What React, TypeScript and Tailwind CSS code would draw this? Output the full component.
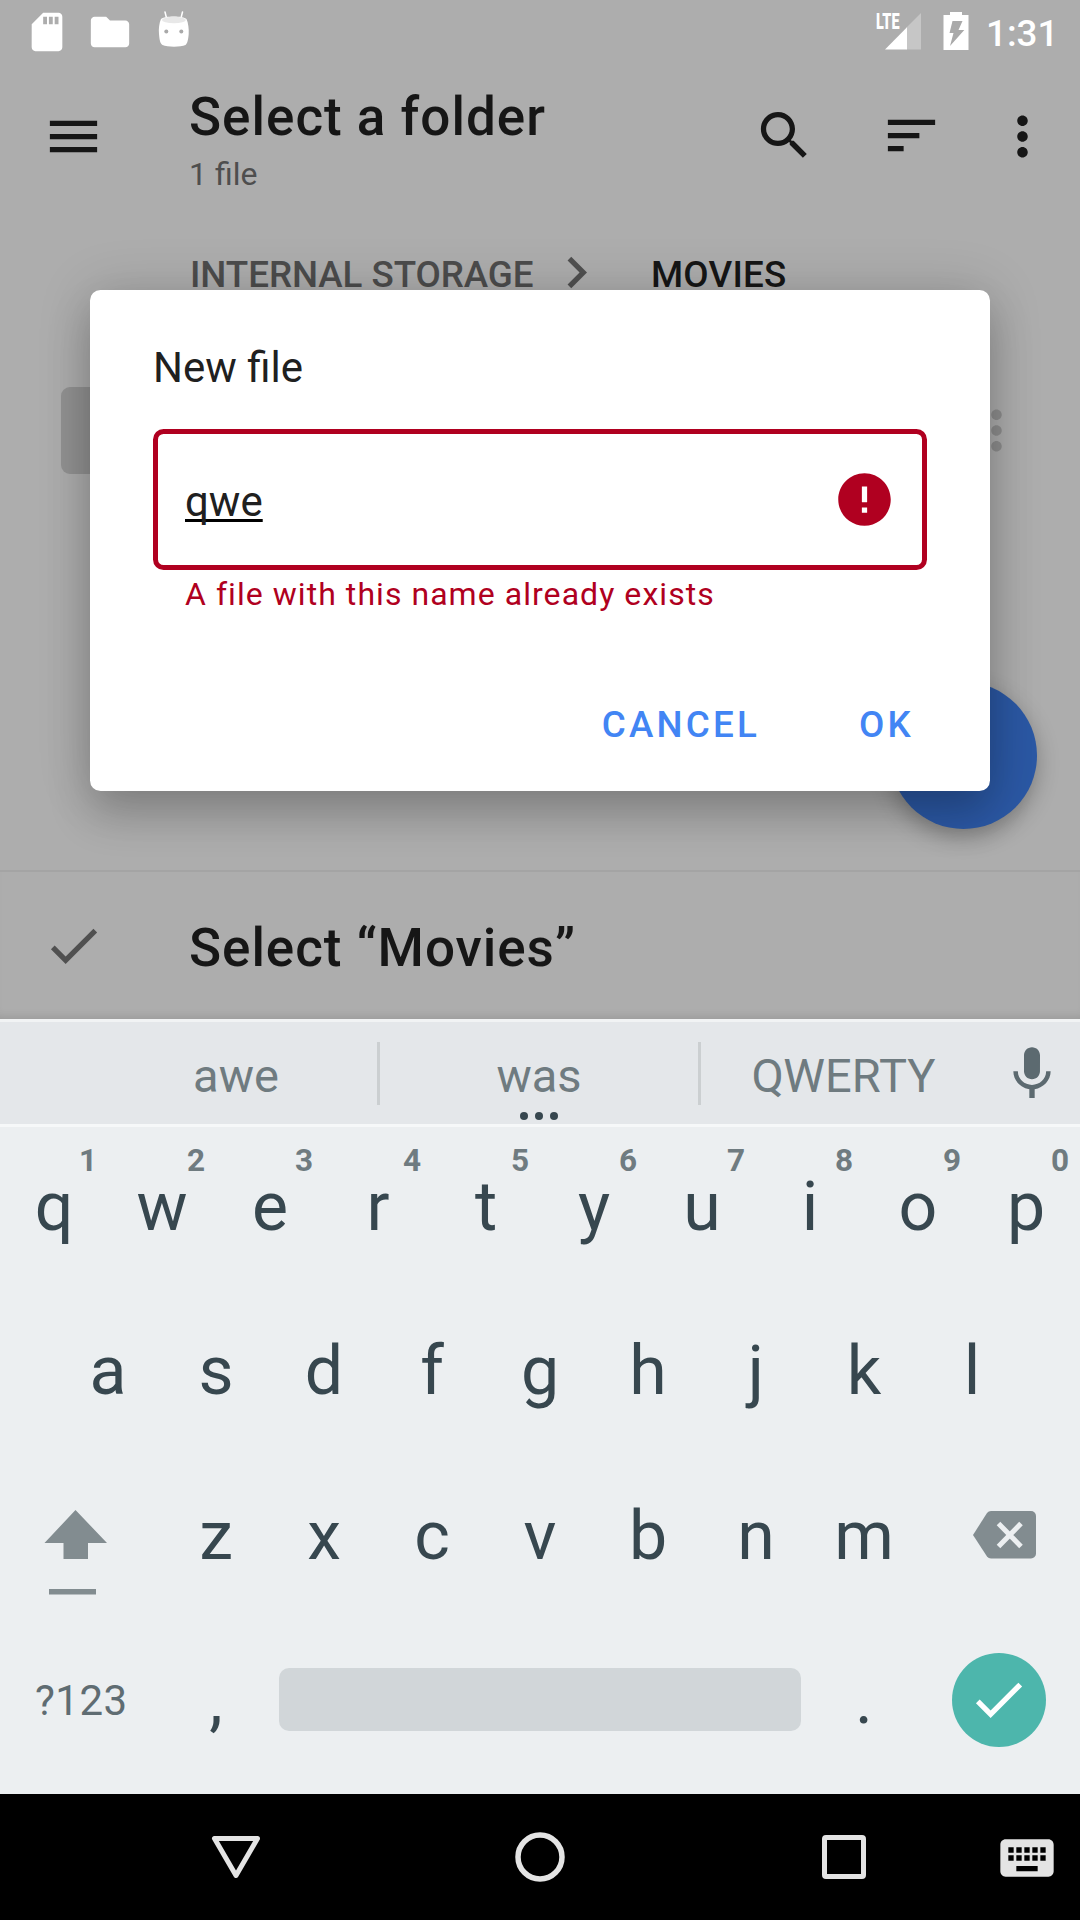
import React from "react";

type IconProps = { d: string; className: string };

function Icon({ d, className }: IconProps) {
  return (
    <svg viewBox="0 0 24 24" fill="currentColor" className={className}>
      <path d={d} />
    </svg>
  );
}

const paths = {
  sd: "M18 2h-8L4.02 8 4 20c0 1.1.9 2 2 2h12c1.1 0 2-.9 2-2V4c0-1.1-.9-2-2-2zm-6 6h-2V4h2v4zm3 0h-2V4h2v4zm3 0h-2V4h2v4z",
  folder: "M10 4H4c-1.1 0-1.99.9-1.99 2L2 18c0 1.1.9 2 2 2h16c1.1 0 2-.9 2-2V8c0-1.1-.9-2-2-2h-8l-2-2z",
  menu: "M3 18h18v-2H3v2zm0-5h18v-2H3v2zm0-7v2h18V6H3z",
  search:
    "M15.5 14h-.79l-.28-.27C15.41 12.59 16 11.11 16 9.5 16 5.91 13.09 3 9.5 3S3 5.91 3 9.5 5.91 16 9.5 16c1.61 0 3.09-.59 4.23-1.57l.27.28v.79l5 4.99L20.49 19l-4.99-5zm-6 0C7.01 14 5 11.99 5 9.5S7.01 5 9.5 5 14 7.01 14 9.5 11.99 14 9.5 14z",
  sort: "M3 18h6v-2H3v2zM3 6v2h18V6H3zm0 7h12v-2H3v2z",
  more: "M12 8c1.1 0 2-.9 2-2s-.9-2-2-2-2 .9-2 2 .9 2 2 2zm0 2c-1.1 0-2 .9-2 2s.9 2 2 2 2-.9 2-2-.9-2-2-2zm0 6c-1.1 0-2 .9-2 2s.9 2 2 2 2-.9 2-2-.9-2-2-2z",
  chevron: "M10 6L8.59 7.41 13.17 12l-4.58 4.59L10 18l6-6z",
  error: "M12 2C6.48 2 2 6.48 2 12s4.48 10 10 10 10-4.48 10-10S17.52 2 12 2zm1 15h-2v-2h2v2zm0-4h-2V7h2v6z",
  check: "M9 16.17L4.83 12l-1.42 1.41L9 19 21 7l-1.41-1.41z",
  mic: "M12 14c1.66 0 2.99-1.34 2.99-3L15 5c0-1.66-1.34-3-3-3S9 3.34 9 5v6c0 1.66 1.34 3 3 3zm5.3-3c0 3-2.54 5.1-5.3 5.1S6.7 14 6.7 11H5c0 3.41 2.72 6.23 6 6.72V21h2v-3.28c3.28-.48 6-3.3 6-6.72h-1.7z",
  keyboard:
    "M20 5H4c-1.1 0-1.99.9-1.99 2L2 17c0 1.1.9 2 2 2h16c1.1 0 2-.9 2-2V7c0-1.1-.9-2-2-2zm-9 3h2v2h-2V8zm0 3h2v2h-2v-2zM8 8h2v2H8V8zm0 3h2v2H8v-2zm-1 2H5v-2h2v2zm0-3H5V8h2v2zm9 7H8v-2h8v2zm0-4h-2v-2h2v2zm0-3h-2V8h2v2zm3 3h-2v-2h2v2zm0-3h-2V8h2v2z",
};

function StatusBar() {
  return (
    <div className="flex h-[63px] items-start justify-between pl-[24px] pr-[28px] text-white">
      <div className="flex pt-[9px]">
        <Icon d={paths.sd} className="h-[46px] w-[46px]" />
        <Icon d={paths.folder} className="ml-[17px] h-[46px] w-[46px]" />
        <svg viewBox="0 0 32 38" className="ml-[25px] mt-px h-[38px] w-[32px]">
          <path d="M7 2l2 8M24.500 2l-2 8" stroke="#fff" strokeWidth="1.500" strokeLinecap="round" />
          <path d="M3 9C1.200 13 .5 19 1 24c.4 5 1 9.500 3.500 11 5 2.300 18 2.300 23 0 2-1.500 2.800-6 3.200-11 .3-5-.4-11-2.200-15-3-3.500-22.500-3.500-25.500 0z" fill="#fff" />
          <ellipse cx="15.900" cy="10" rx="12" ry="3.300" fill="#e8e8e8" />
          <circle cx="8.300" cy="21.500" r="2" fill="#a9a9a9" />
          <circle cx="23.300" cy="21.500" r="2" fill="#a9a9a9" />
        </svg>
      </div>
      <div className="flex">
        <div className="relative mt-[12px] h-[38px] w-[45px]">
          <svg viewBox="0 0 45 38" className="h-[38px] w-[45px]">
            <path d="M45 1v36.500H30.500V15.500z" fill="#c6c6c6" />
            <path d="M31 15.300v22.200H9z" fill="#fff" />
          </svg>
          <span className="absolute left-0 top-[-2px] origin-left scale-x-[0.64] text-[22.500px] font-black leading-[22px]">
            LTE
          </span>
        </div>
        <svg viewBox="0 0 26 38" className="ml-[22px] mt-[12px] h-[38px] w-[26px]">
          <path d="M7 0h12v3h6.500v35H.5V3H7z" fill="#fff" />
          <path d="M9.500 9h10l-4 9h5.800L7 34l3.500-13H6.500z" fill="#a9a9a9" />
        </svg>
        <span className="ml-[17px] mt-[12px] w-[66px] whitespace-nowrap text-[36.750px] font-medium leading-[44px]">1:31</span>
      </div>
    </div>
  );
}

function FileScreen() {
  return (
    <div className="relative flex h-[1019px] flex-col bg-[#adadad] text-[#161616]">
      <StatusBar />
      <div className="flex h-[190px] items-start">
        <Icon d={paths.menu} className="ml-[42px] mt-[42px] h-[63px] w-[63px]" />
        <div className="ml-[84px] pt-[24px]">
          <div className="whitespace-nowrap text-[53px] font-medium leading-[60px] tracking-[1px]">Select a folder</div>
          <div className="mt-[7px] text-[32px] leading-[40px] text-[#4e4e4e]">1 file</div>
        </div>
        <div className="ml-auto mr-[26px] flex pt-[41px]">
          <Icon d={paths.search} className="h-[63px] w-[63px]" />
          <Icon d={paths.sort} className="ml-[64px] h-[63px] w-[63px]" />
          <Icon d={paths.more} className="ml-[48px] mt-px h-[63px] w-[63px]" />
        </div>
      </div>
      <div className="flex h-[134px] items-start pl-[190px] text-[36.750px] font-medium leading-[44px]">
        <span className="w-[355px] whitespace-nowrap tracking-[-0.060px] text-[#4c4c4c]">INTERNAL STORAGE</span>
        <Icon d={paths.chevron} className="-mt-[12px] h-[63px] w-[63px] text-[#505050]" />
        <span className="ml-[43px] tracking-[0.200px]">MOVIES</span>
      </div>
      <div className="flex h-[483px] items-start justify-between pl-[61px] pr-[52px]">
        <div className="h-[87px] w-[88px] rounded-[9px] bg-[#929292]" />
        <Icon d={paths.more} className="mt-[12px] h-[63px] w-[63px] text-[#8e8e8e]" />
      </div>
      <div className="absolute left-[890px] top-[682px] h-[147px] w-[147px] rounded-full bg-[#2b58a4] shadow-[0_8px_22px_rgba(0,0,0,0.28)]" />
      <div className="flex h-[149px] items-center border-t-2 border-[#a4a4a4] pl-[42px] shadow-[inset_0_-8px_8px_-6px_rgba(0,0,0,0.12)]">
        <Icon d={paths.check} className="h-[63px] w-[63px] text-[#505050]" />
        <span className="ml-[84px] whitespace-nowrap pt-[4px] text-[53px] font-medium leading-[60px] tracking-[0.950px]">
          Select “Movies”
        </span>
      </div>
    </div>
  );
}

function NewFileDialog() {
  return (
    <div className="absolute left-[90px] top-[290px] flex h-[501px] w-[900px] flex-col rounded-[10.500px] bg-white px-[63px] pt-[53px] text-[#202020] shadow-[0_24px_44px_rgba(0,0,0,0.2),0_0_54px_rgba(0,0,0,0.15)]">
      <div className="text-[42px] leading-[50px]">New file</div>
      <div className="mt-[36px] flex h-[141px] items-center justify-between rounded-[10.500px] border-[5px] border-[#b00020] pl-[27px] pr-[26px]">
        <span className="pt-[4px] text-[42px] leading-[50px] underline decoration-black decoration-[3px] underline-offset-[3px] [text-decoration-skip-ink:none]">
          qwe
        </span>
        <Icon d={paths.error} className="h-[63px] w-[63px] text-[#b00020]" />
      </div>
      <div className="mt-[4px] pl-[32px] text-[32px] leading-[40px] tracking-[1.050px] text-[#b00020]">
        A file with this name already exists
      </div>
      <div className="mt-[89px] flex justify-end gap-[99px] pr-[13px] text-[36.750px] font-medium leading-[44px] tracking-[3.200px] text-[#4285f4]">
        <span>CANCEL</span>
        <span>OK</span>
      </div>
    </div>
  );
}

function Key({ label, hint }: { label: string; hint?: string }) {
  return (
    <div className="relative flex h-[165px] w-[108px] items-center justify-center">
      <span>{label}</span>
      {hint && (
        <span className="absolute left-[68px] top-[17px] w-[40px] text-center text-[31.500px] font-bold leading-[40px] text-[#6f7b80]">
          {hint}
        </span>
      )}
    </div>
  );
}

function Suggestions() {
  return (
    <div className="flex h-[105px] items-center bg-[#e4e7ea] pt-[4px] text-[47px] leading-[56px] text-[#6f7b80] shadow-[inset_0_3px_0_#f1f3f4]">
      <div className="ml-[95px] w-[282px] pt-[5px] text-center">awe</div>
      <div className="h-[63px] w-[3px] bg-[#cbcfd1]" />
      <div className="relative w-[318px] pt-[5px] text-center">
        was
        <div className="absolute left-[140px] top-[69px] flex gap-[7px]">
          <i className="h-2 w-2 rounded-full bg-[#37474f]" />
          <i className="h-2 w-2 rounded-full bg-[#37474f]" />
          <i className="h-2 w-2 rounded-full bg-[#37474f]" />
        </div>
      </div>
      <div className="h-[63px] w-[3px] bg-[#cbcfd1]" />
      <div className="w-[285px] pt-[5px] text-center">QWERTY</div>
      <Icon d={paths.mic} className="ml-[14px] mt-px h-[64px] w-[64px] text-[#5c6a70]" />
    </div>
  );
}

function Keyboard() {
  return (
    <div className="h-[775px]">
      <Suggestions />
      <div className="h-[670px] bg-[#eceff1] text-[68px] leading-[80px] text-[#37474f] shadow-[inset_0_3px_0_#f6f8f9]">
        <div className="flex">
          {"qwertyuiop".split("").map((k, i) => (
            <Key key={k} label={k} hint={String((i + 1) % 10)} />
          ))}
        </div>
        <div className="-mt-px flex justify-center">
          {"asdfghjkl".split("").map((k) => (
            <Key key={k} label={k} />
          ))}
        </div>
        <div className="flex">
          <div className="h-[165px] w-[162px] pl-[44px] pt-[57px]">
            <svg viewBox="0 0 63 86" className="h-[86px] w-[63px]">
              <path d="M31.500 0L63 33H44v16H19.500V33H.5z" fill="#828c90" />
              <path d="M5 79h47v5.500H5z" fill="#828c90" />
            </svg>
          </div>
          {"zxcvbnm".split("").map((k) => (
            <Key key={k} label={k} />
          ))}
          <div className="flex h-[165px] w-[162px] items-start pl-[55px] pt-[58px]">
            <svg viewBox="0 0 63 48" className="h-[48px] w-[63px]">
              <path d="M18 0h40a5 5 0 015 5v37.500a5 5 0 01-5 5H18a5 5 0 01-4-2L0 24 14 2a5 5 0 014-2z" fill="#828c90" />
              <path d="M25.500 12.500L48 35.500M48 12.500L25.500 35.500" stroke="#eceff1" strokeWidth="5" />
            </svg>
          </div>
        </div>
        <div className="-mt-px flex items-center">
          <span className="w-[162px] pl-[35px] pt-[2px] text-[42px] leading-[50px] tracking-[0.500px] text-[#5f6c72]">?123</span>
          <Key label="," />
          <div className="mx-[9px] h-[63px] w-[522px] rounded-[10px] bg-[#d1d6d9]" />
          <Key label="." />
          <div className="ml-[34px] flex h-[94px] w-[94px] items-center justify-center rounded-full bg-[#4db6ac] pr-[2px] text-white">
            <Icon d={paths.check} className="h-[63px] w-[63px]" />
          </div>
        </div>
      </div>
    </div>
  );
}

function NavBar() {
  return (
    <div className="flex h-[126px] items-center bg-black text-[#e4e4e4]">
      <svg viewBox="0 0 50 44" className="ml-[211px] h-[44px] w-[50px]" fill="none" stroke="currentColor" strokeWidth="5" strokeLinejoin="round">
        <path d="M3.500 3.500h43L25 40.500z" />
      </svg>
      <svg viewBox="0 0 50 50" className="ml-[254px] h-[50px] w-[50px]" fill="none" stroke="currentColor" strokeWidth="5.500">
        <circle cx="25" cy="25" r="22" />
      </svg>
      <div className="ml-[257px] h-[44px] w-[44px] rounded-[4px] border-[5px] border-[#e4e4e4]" />
      <Icon d={paths.keyboard} className="ml-[129px] mt-px h-[64px] w-[64px]" />
    </div>
  );
}

export default function App() {
  return (
    <div className="relative h-[1920px] w-[1080px] overflow-hidden font-[Roboto,sans-serif]">
      <FileScreen />
      <Keyboard />
      <NavBar />
      <NewFileDialog />
    </div>
  );
}
